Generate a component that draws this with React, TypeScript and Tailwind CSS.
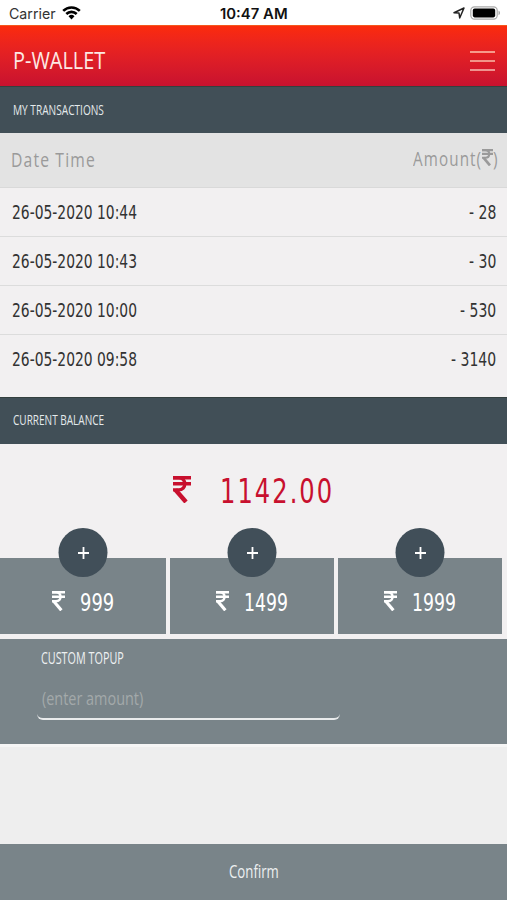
import { useLayoutEffect, useRef, useState } from 'react';
import { clsx } from 'clsx';

const transactions = [
  { date: '26-05-2020 10:44', amount: '- 28', width: 27 },
  { date: '26-05-2020 10:43', amount: '- 30', width: 27 },
  { date: '26-05-2020 10:00', amount: '- 530', width: 36 },
  { date: '26-05-2020 09:58', amount: '- 3140', width: 45 },
];

const topups = [
  { amount: '999', width: 34, tile: 'w-[166px]' },
  { amount: '1499', width: 44, tile: 'w-[164px]' },
  { amount: '1999', width: 44, tile: 'w-[164px]' },
];

interface NarrowProps {
  children: string;
  width: number;
  className?: string;
}

/** Condenses a line of text horizontally so that it fills the given width. */
function Narrow({ children, width, className }: NarrowProps) {
  const ref = useRef<HTMLSpanElement>(null);
  const [scale, setScale] = useState(1);

  useLayoutEffect(() => {
    if (ref.current) setScale(width / ref.current.offsetWidth);
  }, [width, children]);

  return (
    <span className={clsx('block shrink-0', className)} style={{ width }}>
      <span
        ref={ref}
        className="inline-block origin-left whitespace-pre"
        style={{ transform: `scaleX(${scale})` }}
      >
        {children}
      </span>
    </span>
  );
}

function RupeeIcon({ className }: { className?: string }) {
  return (
    <svg
      viewBox="0 0 18 27"
      preserveAspectRatio="none"
      fill="none"
      stroke="currentColor"
      strokeWidth="3.4"
      className={clsx('shrink-0', className)}
    >
      <path d="M0 1.7h18M0 7.8h18" />
      <path d="M0 1.7h5.5c8.4 0 8.4 12.2 0 12.2H0" />
      <path strokeWidth="4.4" d="M2.4 13.8 13 26" />
    </svg>
  );
}

function StatusBar() {
  return (
    <div className="relative flex h-[25px] items-center justify-between bg-white pt-[3px] pr-[6px] pl-[9px] font-[Inter,sans-serif] text-black">
      <div className="flex items-center gap-[6px]">
        <Narrow width={47} className="text-[14.5px] leading-[20px] text-[#333]">Carrier</Narrow>
        <svg width="19" height="15" viewBox="0 0 19 15" className="-mt-[3px]">
          <g fill="none" stroke="#000" strokeWidth="2.6">
            <path d="M1.2 5.9a11.8 11.8 0 0 1 16.6 0" />
            <path d="M4.3 9a7.4 7.4 0 0 1 10.4 0" />
          </g>
          <path d="M9.5 14.4 6.5 11.3a4.3 4.3 0 0 1 6 0z" />
        </svg>
      </div>
      <div className="absolute left-[220px]">
        <Narrow width={68} className="text-[14px] leading-[20px] font-semibold text-[#111]">10:47 AM</Narrow>
      </div>
      <div className="-mt-[2px] flex items-center gap-[5px]">
        <svg width="12" height="12" viewBox="0 0 12 12" fill="none" stroke="#222" strokeWidth="1.5" strokeLinejoin="round">
          <path d="M1 5.7 11 1 6.7 11 6 6z" />
        </svg>
        <svg width="31" height="14" viewBox="0 0 31 14">
          <rect x="0.8" y="0.8" width="26.4" height="12.4" rx="3.6" fill="#fff" stroke="#aaa" strokeWidth="1.2" />
          <rect x="2.8" y="2.6" width="22.4" height="8.8" rx="1.8" />
          <path d="M28.5 4.8c2 .6 2 3.8 0 4.4z" fill="#aaa" />
        </svg>
      </div>
    </div>
  );
}

function SectionBar({ title, className }: { title: string; className: string }) {
  return (
    <div className={clsx('h-[47px] border-t border-[#34403f] bg-[#414f57] pl-[13px]', className)}>
      <Narrow width={91} className="text-[14px] leading-[20px] text-[#e4eaec]">{title}</Narrow>
    </div>
  );
}

export default function App() {
  return (
    <div className="flex h-[900px] w-[507px] flex-col overflow-hidden bg-[#eee] font-['Open_Sans',sans-serif]">
      <StatusBar />

      <header className="flex h-[61px] items-center justify-between border-t border-[#f4571c] bg-linear-to-b from-[#fb2b0b] to-[#c8122f] pt-[9px] pr-[12px] pl-[12px]">
        <Narrow width={92} className="-mt-[2px] ml-px text-[24.5px] leading-[30px] text-[#fde9e4]">P-WALLET</Narrow>
        <div className="flex w-[25px] flex-col gap-[7px]">
          <div className="h-[2px] bg-[#f79a8b]" />
          <div className="h-[2px] bg-[#f29488]" />
          <div className="h-[2px] bg-[#ee9390]" />
        </div>
      </header>

      <SectionBar title="MY TRANSACTIONS" className="pt-[13px]" />

      {/* Transactions table */}
      <div className="flex h-[55px] justify-between border-b border-[#d9d9d9] bg-[#e3e3e3] pr-[8px] pl-[11px] text-[20.5px] leading-[30px] font-medium tracking-[1.5px] text-[#9a9a9a]">
        <Narrow width={85} className="pt-[11px]">Date Time</Narrow>
        <div className="flex pt-[10px]">
          <Narrow width={69}>Amount(</Narrow>
          <RupeeIcon className="mt-[6px] h-[17px] w-[11px]" />
          <Narrow width={6}>)</Narrow>
        </div>
      </div>
      <div className="h-[209px] bg-[#f2f0f1] font-['DejaVu_Sans_Condensed','DejaVu_Sans',sans-serif] text-[19px] leading-[30px] text-[#333]">
        {transactions.map((t, i) => (
          <div
            key={t.date}
            className={clsx(
              'flex h-[49px] justify-between pt-[9px] pr-[11px] pl-[12px]',
              i < transactions.length - 1 && 'border-b border-[#dcdcdc]'
            )}
          >
            <Narrow width={125}>{t.date}</Narrow>
            <Narrow width={t.width}>{t.amount}</Narrow>
          </div>
        ))}
      </div>

      <SectionBar title="CURRENT BALANCE" className="pt-[12px]" />

      {/* Balance */}
      <div className="flex h-[114px] bg-[#f2f0f1] pt-[28px] pl-[173px] text-[#c8102e]">
        <RupeeIcon className="mt-[4px] h-[27px] w-[18px]" />
        <Narrow
          width={114}
          className="ml-[29px] font-['DejaVu_Sans_Condensed','DejaVu_Sans',sans-serif] text-[33px] leading-[40px] tracking-[2.5px]"
        >
          1142.00
        </Narrow>
      </div>

      {/* Quick topups */}
      <div className="flex h-[81px] gap-[4px] bg-[#f2f0f1]">
        {topups.map(t => (
          <div key={t.amount} className={clsx('relative flex h-[76px] justify-center bg-[#798489] pt-[30px] text-white', t.tile)}>
            <div className="absolute -top-[30px] left-1/2 flex h-[49px] w-[49px] -translate-x-1/2 items-center justify-center rounded-full bg-[#414f59]">
              <svg width="12" height="12" viewBox="0 0 12 12" stroke="#fff" strokeWidth="1.8">
                <path d="M6 0v12M0.5 6h11" />
              </svg>
            </div>
            <RupeeIcon className="mt-[3px] h-[20px] w-[13px]" />
            <Narrow
              width={t.width}
              className="ml-[15px] font-['DejaVu_Sans_Condensed','DejaVu_Sans',sans-serif] text-[24px] leading-[30px]"
            >
              {t.amount}
            </Narrow>
          </div>
        ))}
      </div>

      {/* Custom topup */}
      <div className="h-[105px] bg-[#798489] pt-[9px] pl-[37px]">
        <Narrow width={83} className="ml-[4px] text-[15.5px] leading-[20px] text-[#eef1f2]">CUSTOM TOPUP</Narrow>
        <div className="mt-[6px] h-[46px] w-[303px] rounded-[6px] border-b-2 border-[#e9ebec] pt-[9px] pl-[5px]">
          <Narrow width={101} className="text-[19px] leading-[30px] text-[#a3a9aa]">(enter amount)</Narrow>
        </div>
      </div>
      <div className="h-[3px] bg-[#f5f5f5]" />

      <button className="mt-auto flex h-[56px] justify-center bg-[#798489] pt-[12px]">
        <Narrow width={50} className="text-left text-[18.5px] leading-[30px] text-[#edf0f1]">Confirm</Narrow>
      </button>
    </div>
  );
}
